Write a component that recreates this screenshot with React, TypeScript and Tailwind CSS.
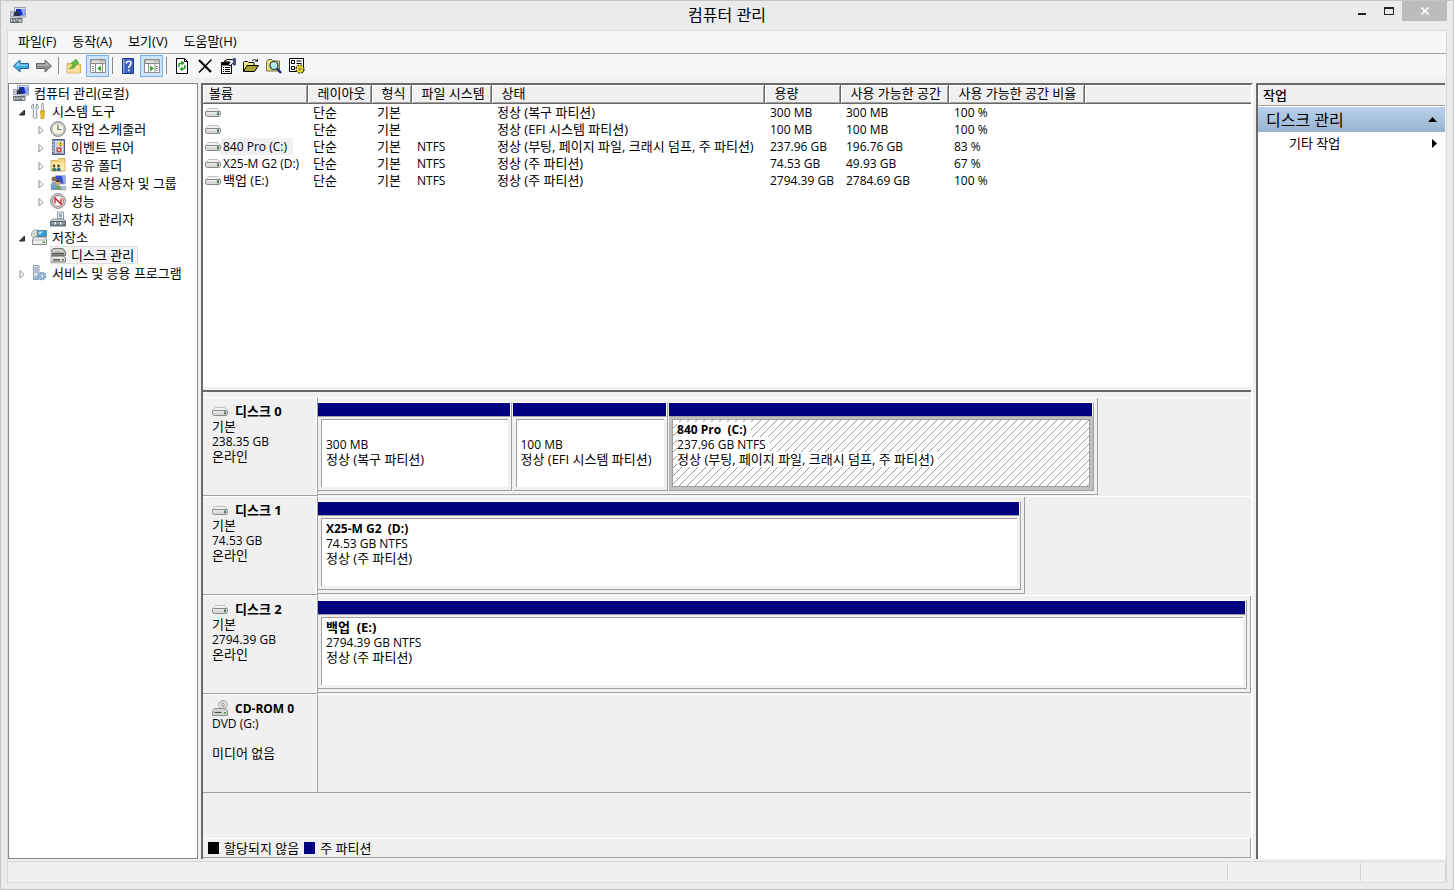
import type { ReactNode } from "react";
import clsx from "clsx";

const Svg = ({ children, className }: { children: ReactNode; className?: string }) => (
  <svg viewBox="0 0 16 16" className={clsx("h-4 w-4 shrink-0", className)} aria-hidden="true">
    {children}
  </svg>
);

/* ---------- icons ---------- */

const ComputerIcon = () => (
  <Svg>
    <path d="M4.500 0.500h11v9.500h-11z" fill="#dfe3ea" stroke="#9aa2b2" />
    <path d="M6 2h8.500v6.500H6z" fill="#1a2fd0" />
    <path d="M11 2h3.500v6.500H13z" fill="#9db0fb" />
    <path d="M0.500 4.500h3V10h-3z" fill="#c3c8ce" stroke="#8b9198" strokeWidth="0.7" />
    <path d="M4 6l3-3 2 0.500L8 6l3 3H4z" fill="#26324d" />
    <path d="M8 10.500h5v1H8z" fill="#9aa2b2" />
    <path d="M0.500 11.500h11.500v4H0.500z" fill="#cfd3d2" stroke="#6a7175" />
    <path d="M2 12.700h1.500m1 0h1.500m1 0h1.500m1 0h1M2 14.300h2m1 0h4" stroke="#3b4247" strokeWidth="0.9" />
  </Svg>
);

const ToolsIcon = () => (
  <Svg>
    <path d="M2.500 1v3l1.500 1.500L5.500 4V1C8 2 8 5.500 5.700 6.500V14c0 2-3.400 2-3.400 0V6.500C0 5.500 0 2 2.500 1z" fill="#f1f3f4" stroke="#7c858c" strokeWidth="0.9" />
    <path d="M10.500 0.500h2V8h-2z" fill="#e6e9eb" stroke="#8b9399" strokeWidth="0.7" />
    <path d="M9.500 8h4v2l-0.500 1v4.500h-3V11l-0.500-1z" fill="#f6c224" stroke="#b98708" strokeWidth="0.7" />
  </Svg>
);

const ClockIcon = () => (
  <Svg>
    <circle cx="8" cy="8" r="7.400" fill="#d3d6d8" stroke="#6f7579" strokeWidth="0.9" />
    <circle cx="8" cy="8" r="5.600" fill="#fbf3dc" stroke="#a7aaa9" strokeWidth="0.6" />
    <path d="M8 3.800v4.700h3.500" fill="none" stroke="#587894" strokeWidth="1.200" />
  </Svg>
);

const EventIcon = () => (
  <Svg>
    <path d="M2.500 0.500h12v15h-12z" fill="#7f93be" stroke="#4a5d86" />
    <path d="M5 2h8.500v12H5z" fill="#e0e7f4" />
    <path d="M5.500 4h7M5.500 6h7M5.500 8h7M5.500 10h7M5.500 12h7" stroke="#8ba0cc" strokeWidth="0.6" />
    <path d="M1 3h3M1 6h3M1 9h3M1 12h3" stroke="#e6e9ef" />
    <circle cx="10.500" cy="5" r="2.500" fill="#f5d23a" />
    <path d="M10.500 3.500v1.800M10.500 6v0.800" stroke="#5c4a00" strokeWidth="0.9" />
    <path d="M6.500 8.500h5v5h-5z" fill="#d23c3c" />
    <path d="M7.800 9.800l2.400 2.400M10.200 9.800l-2.400 2.400" stroke="#fff" strokeWidth="0.9" />
  </Svg>
);

const SharedIcon = () => (
  <Svg>
    <path d="M1 3.500h6.500l1-2H15v12.500H1z" fill="#f3d67c" stroke="#c7a04a" strokeWidth="0.8" />
    <path d="M1.500 5.500H14.500v8H1.500z" fill="#fbe9a8" />
    <circle cx="4" cy="8.800" r="1.300" fill="#4c3a2a" />
    <circle cx="8.500" cy="8.800" r="1.300" fill="#4c3a2a" />
    <path d="M2 14c0-5 4.300-5 4.300 0z" fill="#2f7d6b" />
    <path d="M6.500 14c0-5 4.300-5 4.300 0z" fill="#2f6f9b" />
  </Svg>
);

const UsersIcon = () => (
  <Svg>
    <path d="M5.500 0.500h10v8.500h-10z" fill="#2f4fce" stroke="#b0b8c8" />
    <path d="M12 1h3v7.500h-1.500z" fill="#93abf4" />
    <circle cx="4" cy="4" r="2.500" fill="#8c6b45" />
    <path d="M0.500 12c0-7 7-7 7 0z" fill="#7fa2c8" />
    <circle cx="8" cy="7.500" r="2.500" fill="#d5ab7c" />
    <path d="M5.700 7c0-3 4.600-3 4.600 0z" fill="#54422f" />
    <path d="M4.500 15c0-6.500 7.500-6.500 7.500 0z" fill="#6aa36f" />
    <path d="M10.500 11.500h5v3.500h-4z" fill="#b9c6d6" stroke="#7d8b9c" strokeWidth="0.6" />
    <path d="M1 12h4v3H1z" fill="#6e94cc" />
  </Svg>
);

const PerfIcon = () => (
  <Svg>
    <circle cx="8" cy="8" r="7.400" fill="#dfe1e2" stroke="#70767a" strokeWidth="0.9" />
    <circle cx="8" cy="8" r="5.500" fill="#fff" stroke="#8f6a6a" strokeWidth="0.9" />
    <path d="M5 10.500V5l6 6V5.500" fill="none" stroke="#c92626" strokeWidth="1.400" />
  </Svg>
);

const DeviceIcon = () => (
  <Svg>
    <path d="M7.500 1h6v6.500h-6z" fill="#eef1f3" stroke="#7c868e" strokeWidth="0.8" />
    <path d="M9 2.500h3V6H9z" fill="#8fa5b6" />
    <path d="M2.500 8h11.500l1.500 2.500H0.500z" fill="#c9d0d5" stroke="#6d777f" strokeWidth="0.7" />
    <path d="M0.500 10.500h15v4.500h-15z" fill="#75848f" stroke="#48535c" strokeWidth="0.8" />
    <path d="M1 12h14" stroke="#aebac4" strokeWidth="0.8" />
    <path d="M4.500 11h1.500v2.500H4.500zM10 11h1.500v2.500H10z" fill="#eef1f4" />
  </Svg>
);

const StorageIcon = () => (
  <Svg>
    <circle cx="5" cy="5.500" r="4.500" fill="#dbe2dd" stroke="#808b85" strokeWidth="0.8" />
    <circle cx="5" cy="5.500" r="1.300" fill="#fff" stroke="#808b85" strokeWidth="0.6" />
    <path d="M6.500 1.500h9v6h-9z" fill="#2b9bd3" stroke="#5b7886" strokeWidth="0.8" />
    <path d="M7.500 2.500h5l-3.500 3H7.500z" fill="#a9e0f7" />
    <path d="M1.500 10.500l2-2.500h10.500l1.500 2.500v5h-14z" fill="#eceeee" stroke="#697173" strokeWidth="0.8" />
    <path d="M2 11h13" stroke="#a8aeb0" strokeWidth="0.8" />
    <path d="M11.500 12.500H14V14h-2.500z" fill="#43a43f" />
  </Svg>
);

const DiskMgmtIcon = () => (
  <Svg>
    <path d="M3 1.500h10L15.500 5v3.500H0.500V5z" fill="#b4b6b2" stroke="#62645f" strokeWidth="0.8" />
    <path d="M3 4.500c2-2 8-2 10 0" fill="none" stroke="#f0f0ee" strokeWidth="1.200" />
    <path d="M2 6.800h12" stroke="#4a4c48" strokeWidth="1.300" />
    <path d="M2.500 9h11l2 2v4H0.500v-4z" fill="#d8dad6" stroke="#5b5d59" strokeWidth="0.8" />
    <path d="M2.500 10.800h11" stroke="#fff" strokeWidth="0.8" />
    <path d="M3 12.800h7" stroke="#5b5d5a" strokeWidth="1.500" />
    <path d="M12 12h2v1.500h-2z" fill="#6a6c68" />
  </Svg>
);

const ServicesIcon = () => (
  <Svg>
    <path d="M2.500 0.500h5.500v14H2.500z" fill="#d7e1ea" stroke="#8598a9" strokeWidth="0.9" />
    <path d="M3.500 3h3.500M3.500 5h3.500M3.500 7h3.500" stroke="#6b8399" strokeWidth="0.8" />
    <circle cx="11" cy="11" r="3.500" fill="#a9c8e3" stroke="#6f97bc" strokeWidth="1.700" strokeDasharray="1.700 1" />
    <circle cx="11" cy="11" r="1.500" fill="#fff" stroke="#6f97bc" strokeWidth="0.7" />
    <circle cx="5.500" cy="13" r="1.700" fill="#a9c8e3" stroke="#6f97bc" strokeWidth="0.8" />
  </Svg>
);

const DriveIcon = () => (
  <Svg>
    <path d="M0.500 8c0-0.500 2-3.500 3.500-3.500h8c1.500 0 3.500 3 3.500 3.500z" fill="#f1f2f2" stroke="#b0b3b3" strokeWidth="0.8" />
    <path d="M2 7.500h12c1 0 1.500 0.600 1.500 1.500v1.500c0 1.200-0.700 2-2 2h-11c-1.300 0-2-0.800-2-2V9c0-0.900 0.500-1.500 1.500-1.500z" fill="#d6d8d8" stroke="#7a7e7e" strokeWidth="0.9" />
    <path d="M1.500 8.800h9.500" stroke="#f6f7f7" />
    <path d="M12 8.500h2v2.700h-2z" fill="#4f7f4f" />
  </Svg>
);

const CdIcon = () => (
  <Svg>
    <circle cx="11" cy="4.800" r="4.300" fill="#e5e7e5" stroke="#8f9490" strokeWidth="0.8" />
    <path d="M11 0.800v8M8 2l6 5.500" stroke="#a9c4ad" strokeWidth="0.8" />
    <circle cx="11" cy="4.800" r="1.300" fill="#fff" stroke="#6b706c" strokeWidth="0.7" />
    <path d="M0.500 11l2-2.500h11l2 2.500v4.500H0.500z" fill="#d5d7d5" stroke="#757975" strokeWidth="0.8" />
    <path d="M2.500 12.500h7" stroke="#555955" strokeWidth="1.300" />
    <path d="M12 12h2v1.500h-2z" fill="#439243" />
  </Svg>
);

const BackIcon = () => (
  <Svg>
    <path d="M0.500 8L7 2v3.500h8.500v5H7V14z" fill="#3fa9e6" stroke="#2a6390" strokeLinejoin="round" />
    <path d="M2 7.800L6.300 4v2.500h8v1.300z" fill="#92d6f8" />
  </Svg>
);

const ForwardIcon = () => (
  <Svg>
    <path d="M15.500 8L9 2v3.500H0.500v5H9V14z" fill="#8e8e8e" stroke="#666" strokeLinejoin="round" />
    <path d="M14 7.800L9.700 4v2.500h-8v1.300z" fill="#b5b5b5" />
  </Svg>
);

const FolderUpIcon = () => (
  <Svg>
    <path d="M1 5.500l6-0.500 1 1.500h6.500v8.500H1z" fill="#f0cc72" stroke="#cfab58" strokeWidth="0.8" />
    <path d="M1.500 8h12.500v6.500H1.500z" fill="#f9df9a" />
    <path d="M3 10.500c2.500-0.500 3.500-2.500 4-5H5L10 1l3 4.500h-2.500C10 9 7.500 11 3 10.500z" fill="#5cbd3e" stroke="#3f9a2a" strokeWidth="0.6" />
  </Svg>
);

const PaneIcon = ({ right }: { right?: boolean }) => (
  <Svg>
    <path d="M0.500 1.500h15v13h-15z" fill="#fff" stroke="#8c8c8c" />
    <path d="M1 2h14v2.500H1z" fill="#a9adb2" />
    <path d="M2 3.200h8M11.500 3.200h1M13.500 3.200h1" stroke="#fff" />
    <path d="M1 5.500h14" stroke="#8c8c8c" />
    <path
      d={right ? "M4.500 6v8.500M11 6v8.500M12 8.500h2M12 10.500h2M12 12.500h2" : "M5.500 6v8.500M12.500 6v8.500M2 8.500h2M2 10.500h2M2 12.500h2"}
      stroke="#8c8c8c"
    />
    <path d={right ? "M6 7.500l4 3-4 3z" : "M11 7.500l-4 3 4 3z"} fill="#3fa535" />
  </Svg>
);

const HelpIcon = () => (
  <Svg>
    <path d="M2.500 0.500h11v15h-11z" fill="#3a62c4" stroke="#20397e" />
    <path d="M3 1h1.500v14H3z" fill="#8ba7ea" />
    <path d="M6.300 5.500C6.300 2.500 11 2.500 11 5.300 11 7.500 8.700 7.500 8.700 10" fill="none" stroke="#fff" strokeWidth="1.600" />
    <path d="M7.800 11.500h1.800v1.800H7.800z" fill="#fff" />
  </Svg>
);

const RefreshIcon = () => (
  <Svg>
    <path d="M2.500 0.500h8l3 3v12h-11z" fill="#fff" stroke="#000" />
    <path d="M10.500 0.500v3h3" fill="none" stroke="#000" />
    <path d="M5 9V7c0-1.300 1-2 3-2M11 7v2c0 1.300-1 2-3 2" fill="none" stroke="#1c9a1c" strokeWidth="1.500" />
    <path d="M7.500 2.500v5L10.500 5zM8.500 8.500v5L5.500 11z" fill="#1c9a1c" />
  </Svg>
);

const DeleteIcon = () => (
  <Svg>
    <path d="M2 2l12 12" stroke="#000" strokeWidth="2.200" />
    <path d="M14.500 1.500L2 14.500" stroke="#000" strokeWidth="1.500" />
  </Svg>
);

const PropsIcon = () => (
  <Svg>
    <path d="M1.500 4.500h10v11h-10z" fill="#fff" stroke="#000" />
    <path d="M2 5h9v2.500H2z" fill="#000" />
    <path d="M3 9.500h1m1 0h5M3 11.500h1m1 0h5M3 13.500h1m1 0h5" stroke="#000" />
    <path d="M4 3.500l3-2h5l2.500 1v4l-2-1-2 2.500-2-1.500 1.500-2.500H6z" fill="#eee" stroke="#000" />
    <path d="M13.500 0.500h2v6.500h-2z" fill="#46569b" stroke="#1f2c66" strokeWidth="0.7" />
  </Svg>
);

const OpenIcon = () => (
  <Svg>
    <path d="M0.500 13.500v-9l1-1h3l1 1h5.500v3" fill="#f4ef8c" stroke="#000" />
    <path d="M0.500 13.500l3.500-6h11.500l-4 6z" fill="#a9a33a" stroke="#000" />
    <path d="M9 3c1.500-2 3.500-1.500 4.500 0" fill="none" stroke="#000" />
    <path d="M12 3.500h3V0.800z" fill="#000" />
  </Svg>
);

const FindIcon = () => (
  <Svg>
    <path d="M0.500 3.500l1.500-2h4l1.500 1.500h6v10H0.500z" fill="#e4df86" stroke="#77733a" />
    <circle cx="8" cy="7.500" r="4" fill="#a6eaf2" stroke="#333" strokeWidth="1.200" />
    <path d="M6 6.500c0.500-1 1.500-1.500 2.500-1" fill="none" stroke="#fff" />
    <path d="M11 10.500l4 4.500" stroke="#1b2a8a" strokeWidth="2.400" />
  </Svg>
);

const SettingsIcon = () => (
  <Svg>
    <path d="M0.500 0.500h14v13H0.500z" fill="#fff" stroke="#000" />
    <path d="M2.500 2.500h3v3h-3zM2.500 8.500h3v3h-3z" fill="#fff" stroke="#000" />
    <path d="M7.500 3h5M7.500 5.500h5M7 9h2" fill="none" stroke="#000" />
    <circle cx="11" cy="11" r="3.700" fill="#f1e32a" stroke="#3d3900" strokeWidth="2" strokeDasharray="1.600 1.300" />
    <circle cx="11" cy="11" r="3.200" fill="#f1e32a" />
    <circle cx="11" cy="11" r="1.200" fill="#fff" stroke="#3d3900" strokeWidth="0.7" />
  </Svg>
);

/* ---------- data ---------- */

const menus = ["파일(F)", "동작(A)", "보기(V)", "도움말(H)"];

type TreeNode = {
  label: string;
  icon: ReactNode;
  open?: boolean;
  leaf?: boolean;
  selected?: boolean;
  children?: TreeNode[];
};

const tree: TreeNode[] = [
  {
    label: "시스템 도구",
    icon: <ToolsIcon />,
    open: true,
    children: [
      { label: "작업 스케줄러", icon: <ClockIcon /> },
      { label: "이벤트 뷰어", icon: <EventIcon /> },
      { label: "공유 폴더", icon: <SharedIcon /> },
      { label: "로컬 사용자 및 그룹", icon: <UsersIcon /> },
      { label: "성능", icon: <PerfIcon /> },
      { label: "장치 관리자", icon: <DeviceIcon />, leaf: true },
    ],
  },
  {
    label: "저장소",
    icon: <StorageIcon />,
    open: true,
    children: [{ label: "디스크 관리", icon: <DiskMgmtIcon />, leaf: true, selected: true }],
  },
  { label: "서비스 및 응용 프로그램", icon: <ServicesIcon /> },
];

const headers = ["볼륨", "레이아웃", "형식", "파일 시스템", "상태", "용량", "사용 가능한 공간", "사용 가능한 공간 비율"];

const volumes = [
  { name: "", fs: "", status: "정상 (복구 파티션)", size: "300 MB", free: "300 MB", ratio: "100 %" },
  { name: "", fs: "", status: "정상 (EFI 시스템 파티션)", size: "100 MB", free: "100 MB", ratio: "100 %" },
  { name: "840 Pro (C:)", fs: "NTFS", status: "정상 (부팅, 페이지 파일, 크래시 덤프, 주 파티션)", size: "237.96 GB", free: "196.76 GB", ratio: "83 %", selected: true },
  { name: "X25-M G2 (D:)", fs: "NTFS", status: "정상 (주 파티션)", size: "74.53 GB", free: "49.93 GB", ratio: "67 %" },
  { name: "백업 (E:)", fs: "NTFS", status: "정상 (주 파티션)", size: "2794.39 GB", free: "2784.69 GB", ratio: "100 %" },
];

type Partition = { name?: string; size: string; status: string; share: number; active?: boolean };
type Disk = { name: string; lines: string[]; width: number; partitions: Partition[] };

// width is the percentage of the map used by the disk, share is the weight inside it
const disks: Disk[] = [
  {
    name: "디스크 0",
    lines: ["기본", "238.35 GB", "온라인"],
    width: 83.6,
    partitions: [
      { size: "300 MB", status: "정상 (복구 파티션)", share: 193 },
      { size: "100 MB", status: "정상 (EFI 시스템 파티션)", share: 155 },
      { name: "840 Pro  (C:)", size: "237.96 GB NTFS", status: "정상 (부팅, 페이지 파일, 크래시 덤프, 주 파티션)", share: 425, active: true },
    ],
  },
  {
    name: "디스크 1",
    lines: ["기본", "74.53 GB", "온라인"],
    width: 75.8,
    partitions: [{ name: "X25-M G2  (D:)", size: "74.53 GB NTFS", status: "정상 (주 파티션)", share: 1 }],
  },
  {
    name: "디스크 2",
    lines: ["기본", "2794.39 GB", "온라인"],
    width: 100,
    partitions: [{ name: "백업  (E:)", size: "2794.39 GB NTFS", status: "정상 (주 파티션)", share: 1 }],
  },
  { name: "CD-ROM 0", lines: ["DVD (G:)", "", "미디어 없음"], width: 0, partitions: [] },
];

// Hangul is set one size up so that it lines up with the Latin text
const hasHangul = (text: string) => /[가-힣]/.test(text);
const textSize = (text: string) => (hasHangul(text) ? "text-[13px]" : "text-[12px]");

/* ---------- parts ---------- */

function TitleBar() {
  return (
    <header className="flex h-[29px] items-start">
      <div className="flex w-[140px] pt-1.5 pl-[9px]">
        <ComputerIcon />
      </div>
      <h1 className="flex-1 pt-[3px] text-center text-[16px] leading-[22px]">컴퓨터 관리</h1>
      <div className="flex w-[140px] justify-end pr-1.5">
        <button aria-label="최소화" className="flex h-5 w-7 items-center justify-center">
          <svg viewBox="0 0 10 10" className="h-2.5 w-2.5"><path d="M1 8h8" stroke="#222" strokeWidth="2" /></svg>
        </button>
        <button aria-label="최대화" className="flex h-5 w-[26px] items-center justify-center">
          <svg viewBox="0 0 10 10" className="h-2.5 w-2.5"><path d="M0 1h10v8H0zM1 3h8v5H1z" fill="#222" fillRule="evenodd" /></svg>
        </button>
        <button aria-label="닫기" className="flex h-5 w-[45px] items-center justify-center bg-[#bcbcbc]">
          <svg viewBox="0 0 8 8" className="h-2 w-2"><path d="M0.500 0.500l7 7M7.500 0.500l-7 7" stroke="#fff" strokeWidth="1.600" /></svg>
        </button>
      </div>
    </header>
  );
}

function ToolButton({ label, active, children }: { label: string; active?: boolean; children: ReactNode }) {
  return (
    <button
      aria-label={label}
      aria-pressed={active}
      className={clsx(
        "flex h-[22px] w-[23px] items-center justify-center",
        active && "border border-[#7ab0e6] bg-[#cce4f9]"
      )}
    >
      {children}
    </button>
  );
}

const ToolDivider = () => <div className="mx-[3px] h-[17px] w-px bg-[#8c8c8c]" />;

function Toolbar() {
  return (
    <div className="flex h-[23px] items-center bg-[#f5f6f7] pl-px">
      <ToolButton label="뒤로"><BackIcon /></ToolButton>
      <ToolButton label="앞으로"><ForwardIcon /></ToolButton>
      <ToolDivider />
      <div className="flex items-center gap-px">
        <ToolButton label="위로"><FolderUpIcon /></ToolButton>
        <ToolButton label="콘솔 트리 표시" active><PaneIcon /></ToolButton>
      </div>
      <ToolDivider />
      <div className="flex items-center gap-px">
        <ToolButton label="도움말"><HelpIcon /></ToolButton>
        <ToolButton label="작업 창 표시" active><PaneIcon right /></ToolButton>
      </div>
      <ToolDivider />
      <ToolButton label="새로 고침"><RefreshIcon /></ToolButton>
      <ToolButton label="삭제"><DeleteIcon /></ToolButton>
      <ToolButton label="속성"><PropsIcon /></ToolButton>
      <ToolButton label="열기"><OpenIcon /></ToolButton>
      <ToolButton label="찾기"><FindIcon /></ToolButton>
      <ToolButton label="설정"><SettingsIcon /></ToolButton>
    </div>
  );
}

function TreeItem({ node }: { node: TreeNode }) {
  return (
    <li>
      <button className="flex h-[18px] w-full items-center whitespace-nowrap" aria-expanded={node.leaf ? undefined : !!node.open}>
        <svg viewBox="0 0 10 10" className="mr-1 h-2.5 w-2.5 shrink-0">
          {!node.leaf &&
            (node.open ? (
              <path d="M7.500 4v5h-5z" fill="#404040" stroke="#262626" />
            ) : (
              <path d="M3 2.500L7 6.500 3 10z" fill="#fff" stroke="#8e8e8e" />
            ))}
        </svg>
        <span
          className={clsx(
            "flex h-[18px] items-center gap-[5px] pr-1",
            node.selected && "bg-[#f3f3f3] outline outline-[#dedede] -outline-offset-1"
          )}
        >
          {node.icon}
          <span className="leading-[16px]">{node.label}</span>
        </span>
      </button>
      {node.children && (
        <ul className="pl-[19px]">
          {node.children.map((child) => (
            <TreeItem key={child.label} node={child} />
          ))}
        </ul>
      )}
    </li>
  );
}

function ConsoleTree() {
  return (
    <nav className="w-[190px] shrink-0 overflow-hidden border border-[#828790] bg-white">
      <button className="flex h-[18px] items-center gap-[5px] pl-1 whitespace-nowrap">
        <ComputerIcon />
        <span className="leading-[16px]">컴퓨터 관리(로컬)</span>
      </button>
      <ul className="pl-2">
        {tree.map((node) => (
          <TreeItem key={node.label} node={node} />
        ))}
      </ul>
    </nav>
  );
}

function VolumeTable() {
  return (
    <div className="h-[301px] overflow-hidden bg-white">
      <table className="w-full table-fixed border-collapse whitespace-nowrap text-left">
        <colgroup>
          <col className="w-[104px]" />
          <col className="w-[64px]" />
          <col className="w-[40px]" />
          <col className="w-[80px]" />
          <col className="w-[273px]" />
          <col className="w-[76px]" />
          <col className="w-[108px]" />
          <col className="w-[136px]" />
          <col />
        </colgroup>
        <thead>
          <tr className="h-[18px] bg-[#f0f0f0]">
            {headers.map((header, index) => (
              <th
                key={header}
                className={clsx(
                  "border-r border-b border-[#696969] py-0 leading-[17px] font-normal shadow-[inset_1px_1px_#fff,inset_-1px_-1px_#a0a0a0]",
                  index === 0 ? "pl-1.5" : "pl-2.5"
                )}
              >
                {header}
              </th>
            ))}
            <td className="border-b border-[#696969] shadow-[inset_1px_1px_#fff,inset_0_-1px_#a0a0a0]" />
          </tr>
        </thead>
        <tbody>
          {volumes.map((volume, index) => (
            <tr key={index} className="h-[17px] leading-[17px]">
              <td className="p-0">
                <div className="flex h-[17px] items-center pl-0.5">
                  <DriveIcon />
                  {volume.name && (
                    <span className={clsx("pl-0.5", textSize(volume.name), volume.selected && "bg-[#f0f0f0] pr-1.5")}>
                      {volume.name}
                    </span>
                  )}
                </div>
              </td>
              <td className="py-0 pl-1.5">단순</td>
              <td className="py-0 pl-1.5">기본</td>
              <td className="py-0 pl-1.5 text-[12px]">{volume.fs}</td>
              <td className="py-0 pl-1.5">{volume.status}</td>
              <td className="py-0 pl-1.5 text-[12px]">{volume.size}</td>
              <td className="py-0 pl-1.5 text-[12px]">{volume.free}</td>
              <td className="py-0 pl-1.5 text-[12px]">{volume.ratio}</td>
              <td />
            </tr>
          ))}
        </tbody>
      </table>
    </div>
  );
}

function Hatch() {
  return (
    <svg className="absolute inset-0 h-full w-full" aria-hidden="true">
      <defs>
        <pattern id="hatch" width="8" height="8" patternUnits="userSpaceOnUse">
          <path d="M0 8L8 0M-1 1L1 -1M7 9L9 7" stroke="#999" shapeRendering="crispEdges" />
        </pattern>
      </defs>
      <rect width="100%" height="100%" fill="url(#hatch)" />
    </svg>
  );
}

function PartitionBox({ partition }: { partition: Partition }) {
  const { name, size, status, share, active } = partition;
  return (
    <div
      className="flex min-w-0 basis-0 flex-col border-t border-r border-b border-t-white border-r-[#a0a0a0] border-b-[#a0a0a0]"
      style={{ flexGrow: share }}
    >
      <div className="h-3.5 border-r border-b border-r-white border-b-[#a0a0a0] bg-[#000080]" />
      <div className={clsx("flex-1 p-[3px] pt-0.5", active && "bg-[#c0c0c0]")}>
        <div
          className={clsx(
            "relative h-full overflow-hidden border-t border-l border-[#a0a0a0] bg-white pt-0.5 pl-1 leading-[15px] whitespace-nowrap",
            active && "border-r border-b"
          )}
        >
          {active && <Hatch />}
          <div className="relative">
            <div className="h-[15px]">
              {name && (
                <span className={clsx("inline-block bg-white pr-1 font-bold whitespace-pre", textSize(name))}>{name}</span>
              )}
            </div>
            <div className="h-[15px] text-[12px]">
              <span className="inline-block bg-white pr-1">{size}</span>
            </div>
            <div className="h-[15px]">
              <span className="inline-block bg-white pr-1">{status}</span>
            </div>
          </div>
        </div>
      </div>
    </div>
  );
}

function DiskRow({ disk }: { disk: Disk }) {
  const isCd = disk.partitions.length === 0;
  return (
    <div className="flex h-[99px]">
      <div className="w-[115px] shrink-0 border-t border-r border-b border-t-white border-r-[#a0a0a0] border-b-[#a0a0a0] pt-[5px] pl-[9px] leading-[15px] shadow-[inset_-1px_0_#fff]">
        <div className="flex items-center gap-[7px] font-bold">
          {isCd ? <CdIcon /> : <DriveIcon />}
          <span className={textSize(disk.name)}>{disk.name}</span>
        </div>
        {disk.lines.map((line, index) => (
          <div key={index} className={clsx("h-[15px]", textSize(line))}>{line}</div>
        ))}
      </div>
      <div className={clsx("min-w-0 flex-1 border-t border-t-white pb-px", isCd && "border-b border-b-[#a0a0a0]")}>
        {!isCd && (
          <div className="h-full border-r border-b border-[#a0a0a0] pt-1 pr-[3px] pb-[3px]" style={{ width: `${disk.width}%` }}>
            <div className="flex h-full gap-px">
              {disk.partitions.map((partition, index) => (
                <PartitionBox key={index} partition={partition} />
              ))}
            </div>
          </div>
        )}
      </div>
    </div>
  );
}

function Legend() {
  return (
    <div className="mb-px flex h-[20px] items-center gap-[5px] border-t border-r border-b border-t-white border-r-[#a0a0a0] border-b-[#a0a0a0] pb-px pl-[5px]">
      <span className="h-3 w-[11px] bg-black" />
      <span className="leading-[16px]">할당되지 않음</span>
      <span className="h-3 w-[11px] bg-[#000080]" />
      <span className="leading-[16px]">주 파티션</span>
    </div>
  );
}

function ActionsPane() {
  return (
    <aside className="mr-px w-[189px] shrink-0 border-t-2 border-l-2 border-t-[#696969] border-l-[#696969] bg-white">
      <h2 className="h-[21px] border-b border-[#a0a0a0] bg-[#f0f0f0] pl-[5px] text-[13px] leading-[21px] font-medium">작업</h2>
      <button className="mt-px flex h-[25px] w-full items-center justify-between bg-linear-to-b from-[#b9d1ea] to-[#98b4d2] pr-2 pl-2 text-[16px]">
        디스크 관리
        <svg viewBox="0 0 9 5" className="h-[5px] w-[9px]"><path d="M0 5L4.500 0 9 5z" /></svg>
      </button>
      <button className="flex h-[23px] w-full items-center justify-between pr-2 pl-[31px]">
        기타 작업
        <svg viewBox="0 0 5 9" className="h-[9px] w-[5px]"><path d="M0 0l5 4.500L0 9z" /></svg>
      </button>
    </aside>
  );
}

export default function App() {
  return (
    <div className="flex min-h-screen flex-col border border-[#c6c6c6] bg-[#ebebeb] font-['Open_Sans','Noto_Sans_CJK_KR',sans-serif] text-[13px] text-black">
      <TitleBar />
      <div className="mx-1.5 mb-1.5 flex flex-1 flex-col border border-[#d9d9d9] bg-[#f0f0f0]">
        <div className="flex h-[23px] items-center border-b border-[#a0a0a0] bg-[#f5f6f7] pb-0.5 pl-0.5">
          {menus.map((menu) => (
            <button key={menu} className="px-2 leading-[20px]">{menu}</button>
          ))}
        </div>
        <Toolbar />
        <div className="mt-1.5 flex flex-1 gap-[3px]">
          <ConsoleTree />
          <main className="flex min-w-0 flex-1 flex-col border-t-2 border-r-2 border-l-2 border-t-[#696969] border-r-white border-l-[#696969]">
            <VolumeTable />
            <div className="h-[6px] border-t border-b-2 border-t-white border-b-[#696969]" />
            <div className="mt-[5px]">
              {disks.map((disk) => (
                <DiskRow key={disk.name} disk={disk} />
              ))}
            </div>
            <div className="flex-1" />
            <Legend />
          </main>
          <ActionsPane />
        </div>
        <footer className="mt-0.5 flex h-[21px] justify-end border-t border-[#d7d7d7] py-px">
          <div className="w-[133px] border-l border-[#d0d0d0]" />
          <div className="w-[86px] border-x border-[#d0d0d0]" />
        </footer>
      </div>
    </div>
  );
}
